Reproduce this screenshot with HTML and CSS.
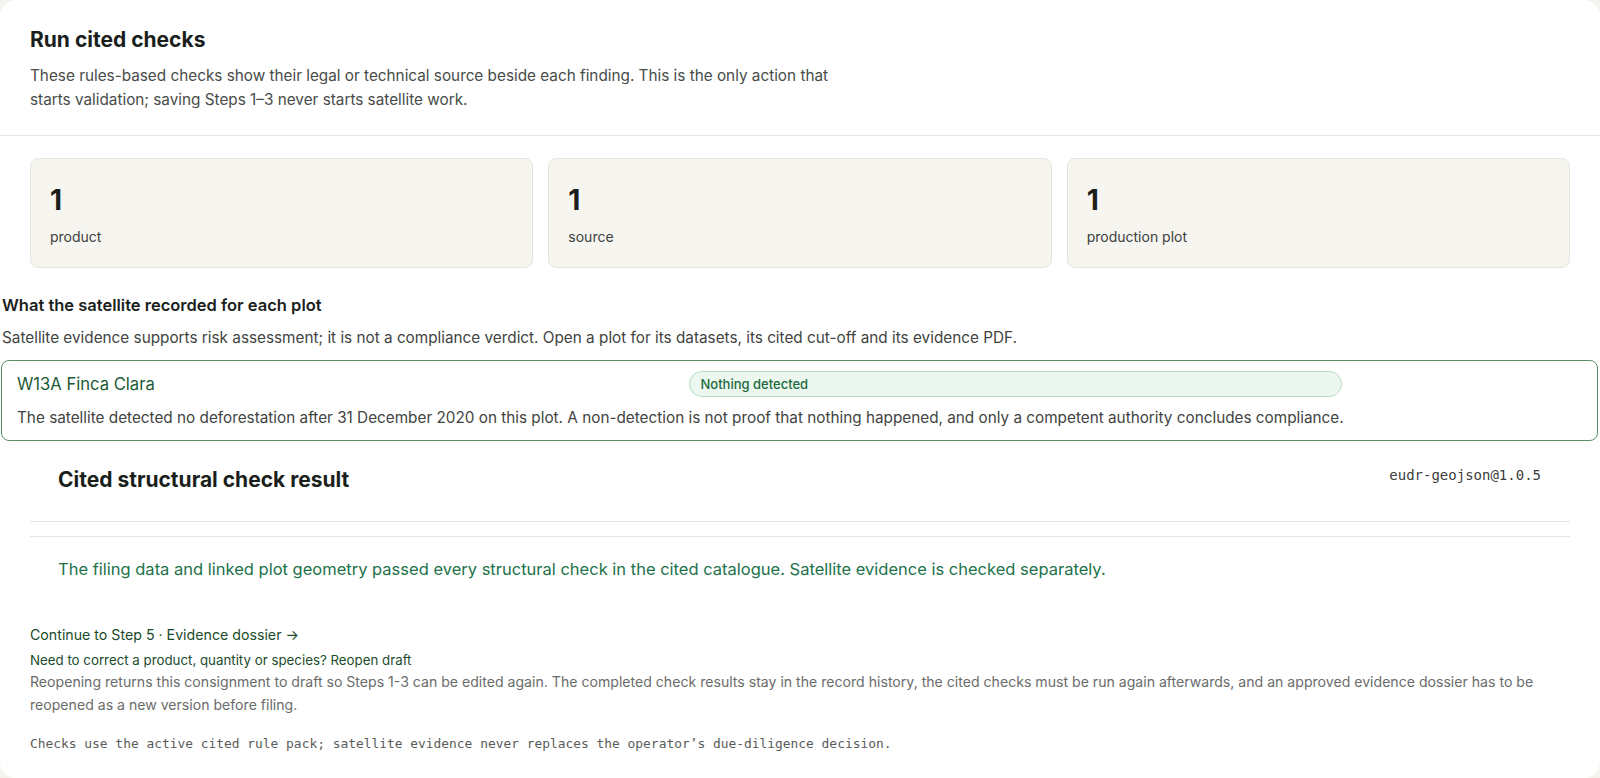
FILE: index.html
```html
<!DOCTYPE html>
<html lang="en">
<head>
    <meta charset="UTF-8">
    <meta name="viewport" content="width=device-width, initial-scale=1.0">
    <title>Run cited checks</title>
    <link rel="stylesheet" href="styles.css">
</head>
<body>
    <div class="panel">
        <div class="panel-head">
            <h1>Run cited checks</h1>
            <p class="lead">These rules-based checks show their legal or technical source beside each finding. This is the only action that starts validation; saving Steps 1–3 never starts satellite work.</p>
        </div>

        <div class="stats">
            <div class="stat">
                <div class="stat-num">1</div>
                <div class="stat-label">product</div>
            </div>
            <div class="stat">
                <div class="stat-num">1</div>
                <div class="stat-label">source</div>
            </div>
            <div class="stat">
                <div class="stat-num">1</div>
                <div class="stat-label">production plot</div>
            </div>
        </div>

        <div class="satellite">
            <h3>What the satellite recorded for each plot</h3>
            <p class="sat-note">Satellite evidence supports risk assessment; it is not a compliance verdict. Open a plot for its datasets, its cited cut-off and its evidence PDF.</p>

            <div class="plot-card">
                <div class="plot-row">
                    <div class="plot-name">W13A Finca Clara</div>
                    <div class="badge">Nothing detected</div>
                    <div></div>
                </div>
                <p class="plot-text">The satellite detected no deforestation after 31 December 2020 on this plot. A non-detection is not proof that nothing happened, and only a competent authority concludes compliance.</p>
            </div>
        </div>

        <div class="result">
            <div class="result-head">
                <h2>Cited structural check result</h2>
                <code class="pack">eudr-geojson@1.0.5</code>
            </div>
            <div class="result-body">
                <p class="pass">The filing data and linked plot geometry passed every structural check in the cited catalogue. Satellite evidence is checked separately.</p>
            </div>
        </div>

        <div class="next">
            <a class="next-link" href="#">Continue to Step 5 · Evidence dossier →</a>
            <a class="reopen-link" href="#">Need to correct a product, quantity or species? Reopen draft</a>
            <p class="reopen-text">Reopening returns this consignment to draft so Steps 1-3 can be edited again. The completed check results stay in the record history, the cited checks must be run again afterwards, and an approved evidence dossier has to be reopened as a new version before filing.</p>
            <p class="footnote">Checks use the active cited rule pack; satellite evidence never replaces the operator’s due-diligence decision.</p>
        </div>
    </div>
</body>
</html>
```

FILE: styles.css
```css
* {
    box-sizing: border-box;
}
body {
    margin: 0;
    background: #f4f3ee;
    font-family: Inter, "Noto Sans", sans-serif;
    color: #1b1f1c;
}
.panel {
    background: #ffffff;
    border-radius: 16px;
    min-height: 100vh;
    overflow: hidden;
}
.panel-head {
    padding: 26px 30px 23px;
    border-bottom: 1px solid #e6e6e3;
}
h1 {
    margin: 0;
    font-size: 21px;
    line-height: 28px;
    font-weight: 700;
}
.lead {
    margin: 10px 0 0;
    max-width: 830px;
    font-size: 15.3px;
    line-height: 24px;
    color: #474c49;
}

/* counters */
.stats {
    display: grid;
    grid-template-columns: repeat(3, 1fr);
    gap: 15px;
    padding: 0 30px;
    margin-top: 22px;
}
.stat {
    background: #f6f5f0;
    border: 1px solid #e7e5de;
    border-radius: 8px;
    padding: 21px 19px 20px;
}
.stat-num {
    font-size: 28px;
    line-height: 40px;
    font-weight: 700;
}
.stat-label {
    margin-top: 7px;
    font-size: 14px;
    line-height: 20px;
    color: #3c403d;
}

/* satellite section */
.satellite {
    margin-top: 26px;
    padding: 0 2px 0 1px;
}
.satellite h3 {
    margin: 0 0 0 1px;
    font-size: 16.5px;
    line-height: 22px;
    font-weight: 600;
}
.sat-note {
    margin: 11px 0 11px 1px;
    font-size: 15.3px;
    line-height: 22px;
    color: #3f4441;
}
.plot-card {
    border: 1px solid #5c8e6c;
    border-radius: 8px;
    padding: 10px 15px 11px;
}
.plot-row {
    display: grid;
    grid-template-columns: 1fr 1fr 222px;
    gap: 18px;
    align-items: center;
}
.plot-name {
    font-size: 16.6px;
    color: #1e5a37;
}
.badge {
    height: 26px;
    line-height: 24px;
    padding: 0 11px;
    border: 1px solid #b7dbc3;
    border-radius: 13px;
    background: #ebf7ef;
    color: #1d6a3f;
    font-size: 13px;
    font-weight: 500;
}
.plot-text {
    margin: 10px 0 0;
    font-size: 15.3px;
    line-height: 22px;
    color: #3f4441;
}

/* structural result */
.result {
    margin: 0 30px;
}
.result-head {
    display: flex;
    justify-content: space-between;
    align-items: flex-start;
    padding: 25px 29px 27px 28px;
    border-bottom: 1px solid #e6e6e3;
}
h2 {
    margin: 0;
    font-size: 21px;
    line-height: 28px;
    font-weight: 700;
}
.pack {
    font-family: "DejaVu Sans Mono", "Liberation Mono", monospace;
    font-size: 14px;
    line-height: 20px;
    color: #3a3d3b;
    margin-top: -1px;
}
.result-body {
    margin-top: 14px;
    border-top: 1px solid #e6e6e3;
    padding: 20px 28px 0;
}
.pass {
    margin: 0;
    font-size: 16.5px;
    line-height: 24px;
    color: #22724a;
}

/* follow-up actions */
.next {
    padding: 44px 30px 0;
    display: flex;
    flex-direction: column;
    align-items: flex-start;
}
.next-link,
.reopen-link {
    font-size: 14.2px;
    line-height: 20px;
    color: #1b4b2c;
    text-decoration: none;
}
.reopen-link {
    margin-top: 5px;
    font-size: 13.3px;
}
.reopen-text {
    margin: 0;
    font-size: 14.1px;
    line-height: 23px;
    color: #6a6c6a;
}
.footnote {
    margin: 19px 0 0;
    font-family: "DejaVu Sans Mono", "Liberation Mono", monospace;
    font-size: 12.9px;
    line-height: 18px;
    color: #595c5a;
}
```
